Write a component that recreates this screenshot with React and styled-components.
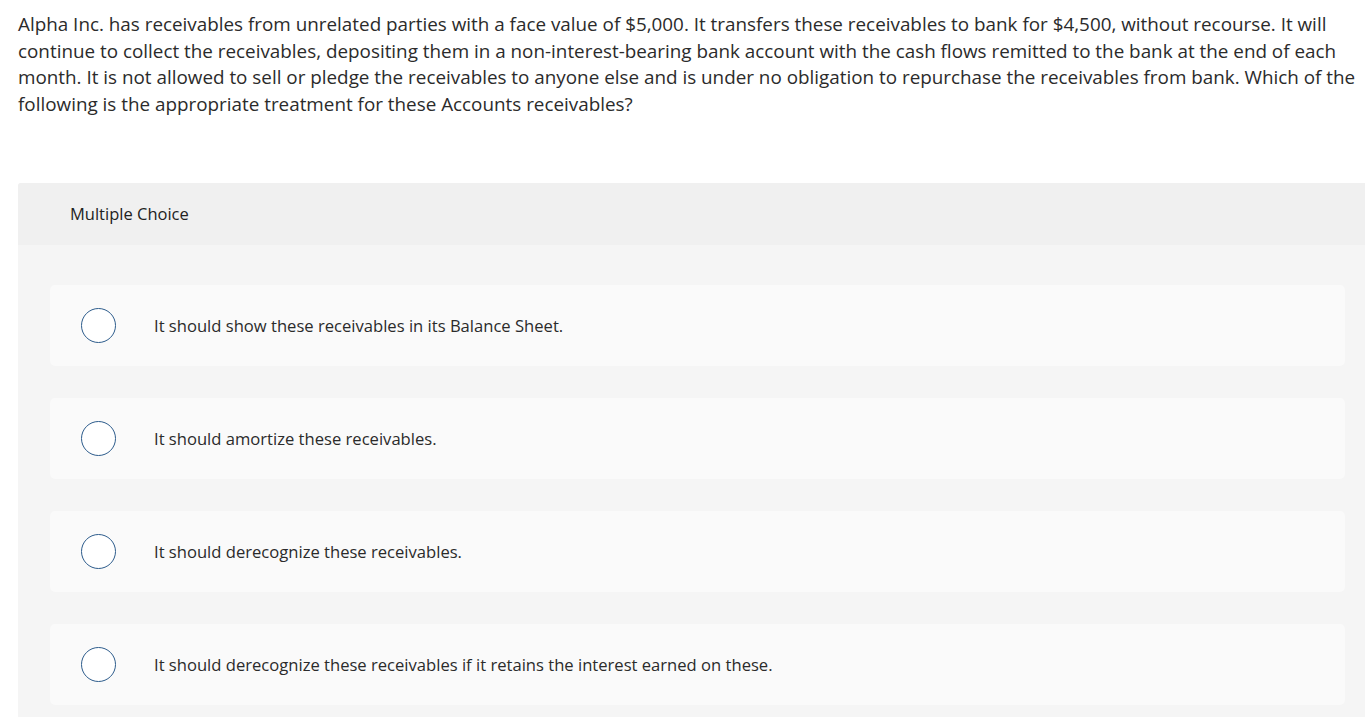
import React from 'react'
import styled, { createGlobalStyle } from 'styled-components'

const GlobalStyle = createGlobalStyle`
  html, body {
    margin: 0;
    padding: 0;
    background: #ffffff;
    overflow-x: hidden;
  }
  body {
    font-family: 'Open Sans', 'Liberation Sans', sans-serif;
    color: #2b2b2b;
  }
`

const choices = [
  'It should show these receivables in its Balance Sheet.',
  'It should amortize these receivables.',
  'It should derecognize these receivables.',
  'It should derecognize these receivables if it retains the interest earned on these.',
]

const App = () => {
  return (
    <PageWrapper>
      <GlobalStyle />
      <Prompt>
        Alpha Inc. has receivables from unrelated parties with a face value of $5,000. It transfers these receivables to bank for $4,500, without recourse. It will
        continue to collect the receivables, depositing them in a non-interest-bearing bank account with the cash flows remitted to the bank at the end of each
        month. It is not allowed to sell or pledge the receivables to anyone else and is under no obligation to repurchase the receivables from bank. Which of the
        following is the appropriate treatment for these Accounts receivables?
      </Prompt>

      <ChoicePanel>
        <PanelHeader>Multiple Choice</PanelHeader>
        <ChoiceList>
          {choices.map((text) => (
            <ChoiceRow key={text}>
              <Radio type="radio" name="answer" />
              <ChoiceText>{text}</ChoiceText>
            </ChoiceRow>
          ))}
        </ChoiceList>
      </ChoicePanel>
    </PageWrapper>
  )
}

export default App

const PageWrapper = styled.div`
  padding: 11px 0 0 18px;
`

const Prompt = styled.p`
  margin: 0;
  max-width: 1345px;
  font-size: 18.85px;
  line-height: 26.5px;
  color: #2b2b2b;
`

const ChoicePanel = styled.section`
  margin-top: 66px;
  margin-right: -12px;
  border-radius: 3px 0 0 0;
  background: #f5f5f5;
  overflow: hidden;
`

const PanelHeader = styled.div`
  height: 62px;
  display: flex;
  align-items: center;
  padding: 0 0 2px 52px;
  box-sizing: border-box;
  background: #f0f0f0;
  font-size: 16.5px;
  color: #222;
`

const ChoiceList = styled.div`
  display: flex;
  flex-direction: column;
  gap: 32px;
  padding: 40px 32px 12px;
`

const ChoiceRow = styled.label`
  height: 81px;
  display: flex;
  align-items: center;
  padding-left: 31px;
  border-radius: 5px;
  background: #fafafa;
  cursor: pointer;
`

const Radio = styled.input`
  appearance: none;
  margin: 0;
  width: 35px;
  height: 35px;
  border: 1.5px solid #2d5c8c;
  border-radius: 50%;
  background: #ffffff;
  flex-shrink: 0;
`

const ChoiceText = styled.span`
  margin-left: 38px;
  font-size: 16.6px;
  color: #2b2b2b;
`
